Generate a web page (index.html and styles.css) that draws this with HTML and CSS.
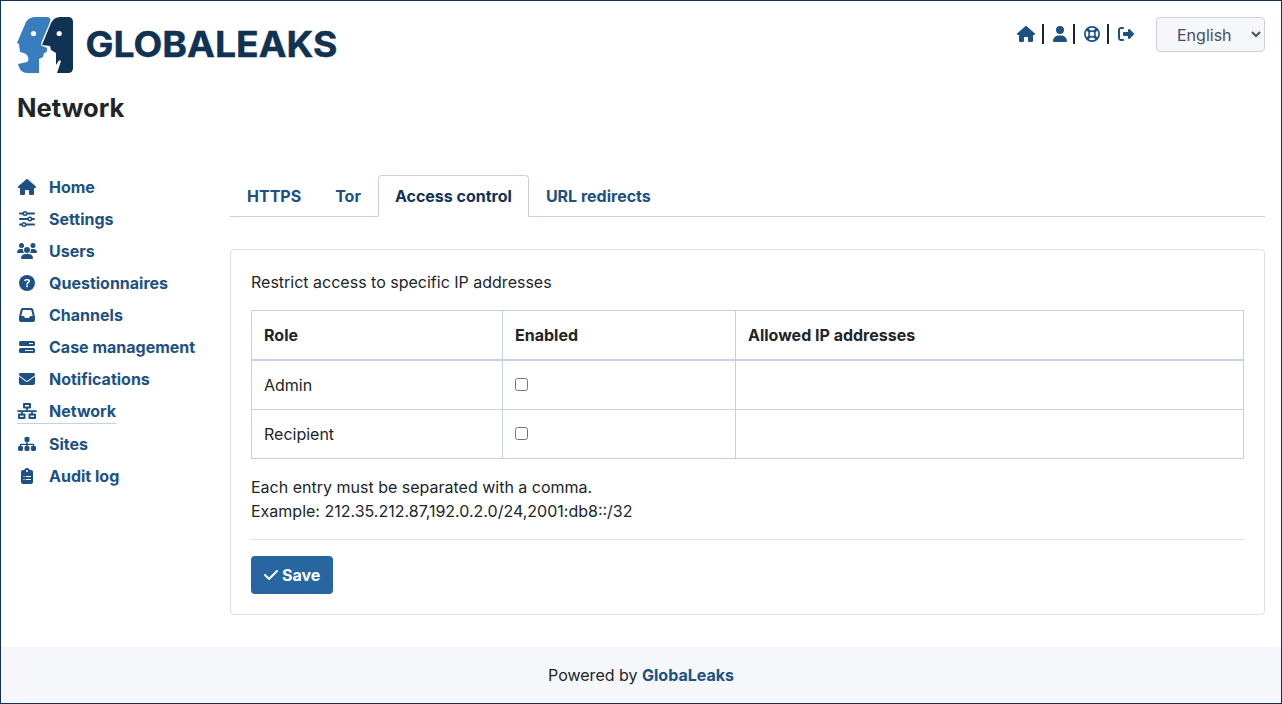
FILE: index.html
```html
<!DOCTYPE html>
<html lang="en">
<head>
<meta charset="utf-8">
<title>GlobaLeaks - Network</title>
<link rel="stylesheet" href="styles.css">
</head>
<body>
<svg class="defs" width="0" height="0" aria-hidden="true">
  <symbol id="home" viewBox="0 0 576 512"><path d="M575.8 255.5c0 18-15 32.1-32 32.1h-32l.7 160.2c0 2.7-.2 5.4-.5 8.1V472c0 22.1-17.9 40-40 40H392c-22.1 0-40-17.9-40-40V384c0-17.7-14.3-32-32-32H256c-17.7 0-32 14.3-32 32v88c0 22.1-17.9 40-40 40H104c-22.1 0-40-17.9-40-40V287.6H32c-18 0-32-14-32-32.1c0-9 3-17 10-24L266.4 8c7-7 15-8 22-8s15 2 21 7L564.8 231.5c8 7 12 15 11 24z"/></symbol>
  <symbol id="user" viewBox="0 0 448 512"><path d="M224 256A128 128 0 1 0 224 0a128 128 0 1 0 0 256zm-45.7 48C79.8 304 0 383.8 0 482.3C0 498.7 13.3 512 29.7 512H418.3c16.4 0 29.7-13.3 29.7-29.7C448 383.8 368.2 304 269.7 304H178.3z"/></symbol>
  <symbol id="ring" viewBox="0 0 512 512"><g fill="none" stroke="currentColor"><circle cx="256" cy="256" r="228" stroke-width="56"/><circle cx="256" cy="256" r="98" stroke-width="48"/><path stroke-width="84" d="M95 95l90 90M417 95l-90 90M95 417l90-90M417 417l-90-90"/></g></symbol>
  <symbol id="logout" viewBox="0 0 512 512"><path d="M377.9 105.9L500.7 228.7c7.2 7.2 11.3 17.1 11.3 27.3s-4.1 20.1-11.3 27.3L377.9 406.1c-6.4 6.4-15 9.9-24 9.900c-18.7 0-33.9-15.2-33.9-33.9V320H192c-17.7 0-32-14.3-32-32v-64c0-17.7 14.3-32 32-32h128v-62.1c0-18.7 15.2-33.9 33.9-33.900c9 0 17.6 3.6 24 9.900zM160 96H96c-17.7 0-32 14.3-32 32v256c0 17.7 14.3 32 32 32h64c17.7 0 32 14.3 32 32s-14.3 32-32 32H96c-53 0-96-43-96-96V128C0 75 43 32 96 32h64c17.7 0 32 14.3 32 32s-14.3 32-32 32z"/></symbol>
  <symbol id="sliders" viewBox="0 0 512 512"><g fill="none" stroke="currentColor" stroke-width="64" stroke-linecap="round"><path d="M32 80h100M250 80h230M32 256h255M410 256h70M32 432h68M220 432h260"/><circle cx="192" cy="80" r="56" stroke-width="48"/><circle cx="347" cy="256" r="56" stroke-width="48"/><circle cx="160" cy="432" r="56" stroke-width="48"/></g></symbol>
  <symbol id="users" viewBox="0 0 640 512"><path d="M144 0a80 80 0 1 1 0 160 80 80 0 0 1 0-160zM512 0a80 80 0 1 1 0 160 80 80 0 0 1 0-160zM0 298.7C0 239.8 47.8 192 106.7 192h42.7c15.9 0 31 3.5 44.6 9.7-1.3 7.2-1.9 14.7-1.9 22.3 0 38.2 16.8 72.5 43.3 96H21.3C9.6 320 0 310.4 0 298.7zM405.3 320h-.7c26.6-23.5 43.3-57.8 43.3-96 0-7.6-.7-15-1.9-22.3 13.6-6.3 28.7-9.7 44.6-9.700h42.700C592.2 192 640 239.8 640 298.7c0 11.8-9.6 21.3-21.3 21.3zM224 224a96 96 0 1 1 192 0 96 96 0 0 1-192 0zM128 485.3C128 411.7 187.7 352 261.3 352h117.4C452.3 352 512 411.7 512 485.3c0 14.7-11.9 26.7-26.7 26.7H154.7c-14.8 0-26.7-12-26.7-26.7z"/></symbol>
  <symbol id="question" viewBox="0 0 512 512"><circle cx="256" cy="256" r="256"/><path d="M192 180c5-23 18-28 36-28h52c27 0 48 19 48 44 0 45-72 45-72 98" fill="none" stroke="#fff" stroke-width="48" stroke-linecap="round"/><circle cx="256" cy="360" r="32" fill="#fff"/></symbol>
  <symbol id="inbox" viewBox="0 0 512 512"><path fill-rule="evenodd" d="M121 32h270c31 0 57 20 64 50l53 210c3 10 4 20 4 30v94c0 35-29 64-64 64H64c-35 0-64-29-64-64v-94c0-10 1-20 4-30L57 82c7-30 33-50 64-50zM121 96L72 288h68c12 0 23 7 29 18l14 28c5 11 16 18 28 18h90c12 0 23-7 29-18l14-28c6-11 17-18 29-18h67L391 96z"/></symbol>
  <symbol id="server" viewBox="0 0 512 512"><path fill-rule="evenodd" d="M48 64h416a48 48 0 0 1 48 48v64a48 48 0 0 1-48 48H48a48 48 0 0 1-48-48v-64a48 48 0 0 1 48-48zm272 64v32h128v-32zM48 288h416a48 48 0 0 1 48 48v64a48 48 0 0 1-48 48H48a48 48 0 0 1-48-48v-64a48 48 0 0 1 48-48zm144 64v32h256v-32z"/></symbol>
  <symbol id="envelope" viewBox="0 0 512 512"><path d="M48 64C21.500 64 0 85.500 0 112c0 15.100 7.100 29.300 19.200 38.400L236.800 313.600c11.400 8.500 27 8.500 38.400 0L492.800 150.400c12.100-9.100 19.200-23.300 19.200-38.400 0-26.500-21.500-48-48-48zM0 176v208c0 35.300 28.700 64 64 64h384c35.300 0 64-28.700 64-64V176L294.400 339.200c-22.800 17.100-54 17.100-76.800 0z"/></symbol>
  <symbol id="network" viewBox="0 0 640 512"><g fill="none" stroke="currentColor" stroke-width="64" stroke-linejoin="round"><path d="M224 32h192v112H224zM64 368h176v112H64zM400 368h176v112H400z"/><path stroke-linecap="round" stroke-width="56" d="M32 256h576M320 144v112M160 256v112M480 256v112"/></g></symbol>
  <symbol id="sitemap" viewBox="0 0 576 512"><rect x="208" y="32" width="160" height="160" rx="46"/><rect y="320" width="160" height="160" rx="46"/><rect x="208" y="320" width="160" height="160" rx="46"/><rect x="416" y="320" width="160" height="160" rx="46"/><path d="M288 160v210M80 360v-72q0-20 20-20h376q20 0 20 20v72" fill="none" stroke="currentColor" stroke-width="46"/></symbol>
  <symbol id="clipboard" viewBox="0 0 384 512"><path fill-rule="evenodd" d="M192 0c42 0 77 27 90 64h38c35 0 64 29 64 64v320c0 35-29 64-64 64H64c-35 0-64-29-64-64V128c0-35 29-64 64-64h38C115 27 150 0 192 0zm0 64a32 32 0 1 0 0 64 32 32 0 0 0 0-64z"/><g stroke="#fff" stroke-width="34" stroke-linecap="round"><path d="M92 272h8M168 272h136M92 368h8M168 368h136"/></g></symbol>
  <symbol id="check" viewBox="0 0 448 512"><path d="M438.600 105.400c12.500 12.500 12.500 32.800 0 45.300l-256 256c-12.500 12.500-32.800 12.500-45.300 0l-128-128c-12.500-12.500-12.500-32.800 0-45.300s32.800-12.500 45.300 0L160 338.700 393.400 105.400c12.500-12.500 32.800-12.500 45.300 0z"/></symbol>
</svg>
<div class="page">
  <header class="header">
    <svg class="logo" width="322" height="56" viewBox="0 0 322 56" role="img" aria-label="GlobaLeaks">
      <path fill="#377dbf" d="M19 0h10q6 0 4 5L25 24q-2 4 0 6l5 1v3l-3 2-1 4-4 2v14H11q-7 0-9-6l-1-3 9-2q2-1 1-5-1-4-8-5l-1-8-2-1 9-21Q12 0 19 0z"/>
      <path fill="#377dbf" d="M23 28l7 3v3l-2 2h-5z"/>
      <path fill="#103253" d="M43 0h8q5 0 5 5v46q0 5-5 5H40l2-6 2-6q-2-2-3 1l-2 3v-12l-5-3-1-4-8-1 9-22Q37 0 43 0z"/>
      <circle cx="16.500" cy="16.500" r="2.600" fill="#fff"/><circle cx="42.200" cy="16.500" r="2.600" fill="#fff"/>
      <text class="logo-text" x="68.500" y="40.200" textLength="252" lengthAdjust="spacingAndGlyphs">GLOBALEAKS</text>
    </svg>
    <nav class="tools">
      <svg class="icon w18"><use href="#home"/></svg><span class="sep"></span>
      <svg class="icon w14"><use href="#user"/></svg><span class="sep"></span>
      <svg class="icon w16"><use href="#ring"/></svg><span class="sep"></span>
      <svg class="icon w16"><use href="#logout"/></svg>
      <select class="language"><option>English</option></select>
    </nav>
  </header>
  <h1 class="title">Network</h1>
  <div class="content">
    <nav class="sidebar">
      <a class="item"><span class="slot"><svg class="icon w18"><use href="#home"/></svg></span>Home</a>
      <a class="item"><span class="slot"><svg class="icon w16"><use href="#sliders"/></svg></span>Settings</a>
      <a class="item"><span class="slot"><svg class="icon w20"><use href="#users"/></svg></span>Users</a>
      <a class="item"><span class="slot"><svg class="icon w16"><use href="#question"/></svg></span>Questionnaires</a>
      <a class="item"><span class="slot"><svg class="icon w16"><use href="#inbox"/></svg></span>Channels</a>
      <a class="item"><span class="slot"><svg class="icon w16"><use href="#server"/></svg></span>Case management</a>
      <a class="item"><span class="slot"><svg class="icon w16"><use href="#envelope"/></svg></span>Notifications</a>
      <a class="item active"><span class="slot"><svg class="icon w20"><use href="#network"/></svg></span>Network</a>
      <a class="item"><span class="slot"><svg class="icon w18"><use href="#sitemap"/></svg></span>Sites</a>
      <a class="item"><span class="slot"><svg class="icon w12"><use href="#clipboard"/></svg></span>Audit log</a>
    </nav>
    <main class="main">
      <div class="tabs">
        <a class="tab">HTTPS</a><a class="tab">Tor</a><a class="tab selected">Access control</a><a class="tab">URL redirects</a>
      </div>
      <section class="card">
        <p class="text">Restrict access to specific IP addresses</p>
        <table class="table">
          <colgroup><col class="col-role"><col class="col-enabled"><col></colgroup>
          <thead><tr><th>Role</th><th>Enabled</th><th>Allowed IP addresses</th></tr></thead>
          <tbody>
            <tr><td>Admin</td><td><input class="check" type="checkbox"></td><td></td></tr>
            <tr><td>Recipient</td><td><input class="check" type="checkbox"></td><td></td></tr>
          </tbody>
        </table>
        <p class="text">Each entry must be separated with a comma.<br>Example: 212.35.212.87,192.0.2.0/24,2001:db8::/32</p>
        <hr class="rule">
        <button class="save"><svg class="icon w14"><use href="#check"/></svg>Save</button>
      </section>
    </main>
  </div>
  <footer class="footer"><span>Powered by <a class="brand">GlobaLeaks</a></span></footer>
</div>
</body>
</html>
```
FILE: styles.css
```css
* { box-sizing: border-box; }
body { margin: 0; font: 16px/24px Inter, sans-serif; color: #212529; background: #fff; }
.defs { position: absolute; }
.page { height: 704px; border: 1px solid #103253; display: flex; flex-direction: column; }
.header { display: flex; justify-content: space-between; align-items: flex-start; padding: 15px 16px 0; height: 74px; }
.logo { display: block; margin-top: 1px; overflow: visible; }
.logo-text { font: 700 35px Inter, sans-serif; fill: #103253; stroke: #103253; stroke-width: 0.4px; }
.tools { display: flex; align-items: center; height: 35px; margin-top: 1px; color: #1d5183; }
.icon { height: 16px; fill: currentColor; flex: none; display: block; }
.tools .icon { margin-bottom: 1px; }
.w12 { width: 12px; }
.w14 { width: 14px; }
.w16 { width: 16px; }
.w18 { width: 18px; }
.w20 { width: 20px; }
.sep { width: 2px; height: 20px; margin: 0 9px 1px 6.600px; background: #212529; }
.language { width: 109px; height: 35px; margin-left: 22px; padding: 0 0 0 16px; font: 16px Inter, sans-serif; color: #495057; background: #f5f7fb; border: 1px solid #c8d0e2; border-radius: 4px; }
.title { margin: 16px 16px 0; font-size: 25.600px; line-height: 34px; font-weight: 700; }
.content { display: flex; padding: 50px 16px 0; }
.sidebar { width: 213px; display: flex; flex-direction: column; align-items: flex-start; gap: 8px; }
.item { display: flex; align-items: center; font-weight: 700; color: #1d5183; height: 24px; }
.item.active { height: 25px; border-bottom: 1px solid #c5d0e0; }
.slot { width: 20px; margin-right: 12px; display: flex; justify-content: center; }
.main { flex: 1; }
.tabs { display: flex; height: 42px; border-bottom: 1px solid #c5d0e0; }
.tab { height: 42px; padding: 8px 16px; border: 1px solid transparent; font-weight: 700; color: #1d5183; }
.tab.selected { color: #103253; background: #fff; border-color: #c5d0e0 #c5d0e0 #fff; border-radius: 4px 4px 0 0; }
.card { margin-top: 32px; padding: 20px; border: 1px solid #dfdfdf; border-radius: 4px; }
.text { margin: 0 0 16px; }
.table { width: 100%; table-layout: fixed; border-collapse: collapse; margin-bottom: 16px; }
.col-role { width: 251px; }
.col-enabled { width: 233px; }
.table th, .table td { padding: 12px; height: 49px; border: 1px solid #c5d0e0; text-align: left; }
.table thead th { border-bottom-width: 2px; }
.check { width: 13px; height: 13px; margin: 0; }
.rule { height: 1px; margin: 0 0 16px; border: 0; background: #dfdfdf; }
.save { display: flex; align-items: center; gap: 4px; height: 38px; padding: 0 13px; border: 0; border-radius: 4px; background: #2866a2; color: #fff; font: 700 16px Inter, sans-serif; }
.footer { height: 56px; margin-top: auto; display: flex; align-items: center; justify-content: center; background: #f5f7fb; }
.brand { font-weight: 700; color: #1d5183; }
```
